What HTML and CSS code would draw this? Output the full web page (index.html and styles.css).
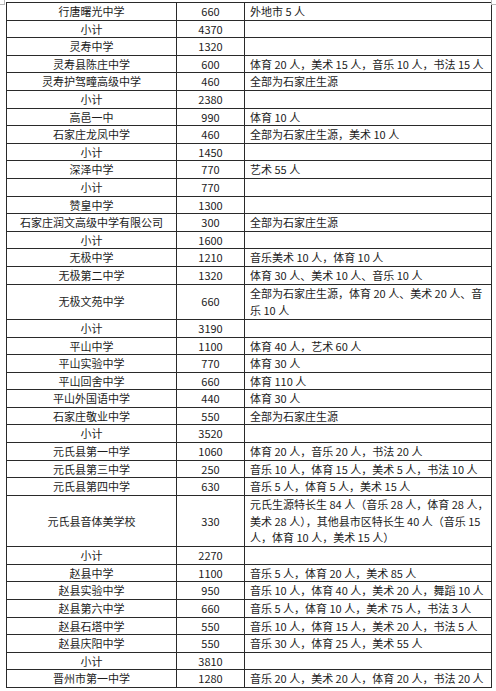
FILE: index.html
```html
<!DOCTYPE html>
<html lang="zh-CN">
<head>
<meta charset="utf-8">
<title>招生计划表</title>
<link rel="stylesheet" href="styles.css">
</head>
<body>
<div class="page">
  <span class="mark mark-tl"></span>
  <span class="mark mark-tr"></span>
  <table class="plan">
    <colgroup>
      <col class="c-name">
      <col class="c-num">
      <col class="c-note">
    </colgroup>
    <tbody>
      <tr><td class="name">行唐曙光中学</td><td class="num">660</td><td class="note">外地市 5 人</td></tr>
      <tr><td class="name">小计</td><td class="num">4370</td><td class="note"></td></tr>
      <tr><td class="name">灵寿中学</td><td class="num">1320</td><td class="note"></td></tr>
      <tr><td class="name">灵寿县陈庄中学</td><td class="num">600</td><td class="note">体育 20 人，美术 15 人，音乐 10 人，书法 15 人</td></tr>
      <tr><td class="name">灵寿护驾疃高级中学</td><td class="num">460</td><td class="note">全部为石家庄生源</td></tr>
      <tr><td class="name">小计</td><td class="num">2380</td><td class="note"></td></tr>
      <tr><td class="name">高邑一中</td><td class="num">990</td><td class="note">体育 10 人</td></tr>
      <tr><td class="name">石家庄龙凤中学</td><td class="num">460</td><td class="note">全部为石家庄生源，美术 10 人</td></tr>
      <tr><td class="name">小计</td><td class="num">1450</td><td class="note"></td></tr>
      <tr><td class="name">深泽中学</td><td class="num">770</td><td class="note">艺术 55 人</td></tr>
      <tr><td class="name">小计</td><td class="num">770</td><td class="note"></td></tr>
      <tr><td class="name">赞皇中学</td><td class="num">1300</td><td class="note"></td></tr>
      <tr><td class="name">石家庄润文高级中学有限公司</td><td class="num">300</td><td class="note">全部为石家庄生源</td></tr>
      <tr><td class="name">小计</td><td class="num">1600</td><td class="note"></td></tr>
      <tr><td class="name">无极中学</td><td class="num">1210</td><td class="note">音乐美术 10 人，体育 10 人</td></tr>
      <tr><td class="name">无极第二中学</td><td class="num">1320</td><td class="note">体育 30 人、美术 10 人、音乐 10 人</td></tr>
      <tr><td class="name">无极文苑中学</td><td class="num">660</td><td class="note two">全部为石家庄生源，体育 20 人、美术 20 人、音<br>乐 10 人</td></tr>
      <tr><td class="name">小计</td><td class="num">3190</td><td class="note"></td></tr>
      <tr><td class="name">平山中学</td><td class="num">1100</td><td class="note">体育 40 人，艺术 60 人</td></tr>
      <tr><td class="name">平山实验中学</td><td class="num">770</td><td class="note">体育 30 人</td></tr>
      <tr><td class="name">平山回舍中学</td><td class="num">660</td><td class="note">体育 110 人</td></tr>
      <tr><td class="name">平山外国语中学</td><td class="num">440</td><td class="note">体育 30 人</td></tr>
      <tr><td class="name">石家庄敬业中学</td><td class="num">550</td><td class="note">全部为石家庄生源</td></tr>
      <tr><td class="name">小计</td><td class="num">3520</td><td class="note"></td></tr>
      <tr><td class="name">元氏县第一中学</td><td class="num">1060</td><td class="note">体育 20 人，音乐 20 人，书法 20 人</td></tr>
      <tr><td class="name">元氏县第三中学</td><td class="num">250</td><td class="note">音乐 10 人，体育 15 人，美术 5 人，书法 10 人</td></tr>
      <tr><td class="name">元氏县第四中学</td><td class="num">630</td><td class="note">音乐 5 人，体育 5 人，美术 15 人</td></tr>
      <tr><td class="name">元氏县音体美学校</td><td class="num">330</td><td class="note three">元氏生源特长生 84 人（音乐 28 人，体育 28 人，<br>美术 28 人），其他县市区特长生 40 人（音乐 15<br>人，体育 10 人，美术 15 人）</td></tr>
      <tr><td class="name">小计</td><td class="num">2270</td><td class="note"></td></tr>
      <tr><td class="name">赵县中学</td><td class="num">1100</td><td class="note">音乐 5 人，体育 20 人，美术 85 人</td></tr>
      <tr><td class="name">赵县实验中学</td><td class="num">950</td><td class="note">音乐 10 人，体育 40 人，美术 20 人，舞蹈 10 人</td></tr>
      <tr><td class="name">赵县第六中学</td><td class="num">660</td><td class="note">音乐 5 人，体育 10 人，美术 75 人，书法 3 人</td></tr>
      <tr><td class="name">赵县石塔中学</td><td class="num">550</td><td class="note">音乐 10 人，体育 15 人，美术 20 人，书法 5 人</td></tr>
      <tr><td class="name">赵县庆阳中学</td><td class="num">550</td><td class="note">音乐 30 人，体育 25 人，美术 55 人</td></tr>
      <tr><td class="name">小计</td><td class="num">3810</td><td class="note"></td></tr>
      <tr><td class="name">晋州市第一中学</td><td class="num">1280</td><td class="note">音乐 20 人，美术 20 人，体育 20 人，书法 20 人</td></tr>
    </tbody>
  </table>
</div>
</body>
</html>
```

FILE: styles.css
```css
html, body {
  margin: 0;
  padding: 0;
  background: #ffffff;
}

.page {
  position: relative;
  width: 496px;
  height: 691px;
  overflow: hidden;
  padding: 2px 0 0 6px;
  box-sizing: border-box;
}

.plan {
  border-collapse: collapse;
  table-layout: fixed;
  width: 485px;
  font-family: "Noto Sans CJK SC", "Noto Sans", sans-serif;
  font-size: 11px;
  line-height: 16.6px;
  color: #1c1c1c;
}

.c-name { width: 170px; }
.c-num { width: 68px; }
.c-note { width: 247px; }

.plan td {
  border: 1px solid #2a2a2a;
  padding: 0;
  white-space: nowrap;
  overflow: hidden;
  vertical-align: middle;
}

.plan td.name,
.plan td.num {
  text-align: center;
}

.plan td.note {
  text-align: left;
  padding-left: 5px;
}

.plan td.two {
  line-height: 17.2px;
}

.plan td.three {
  line-height: 16.8px;
}

.mark {
  position: absolute;
  border-color: #b8b8b8;
  border-style: solid;
  width: 4px;
  height: 4px;
}

.mark-tl {
  left: 0;
  top: 0;
  border-width: 0 1px 1px 0;
}

.mark-tr {
  right: 0;
  top: 0;
  border-width: 0 0 1px 1px;
}
```
